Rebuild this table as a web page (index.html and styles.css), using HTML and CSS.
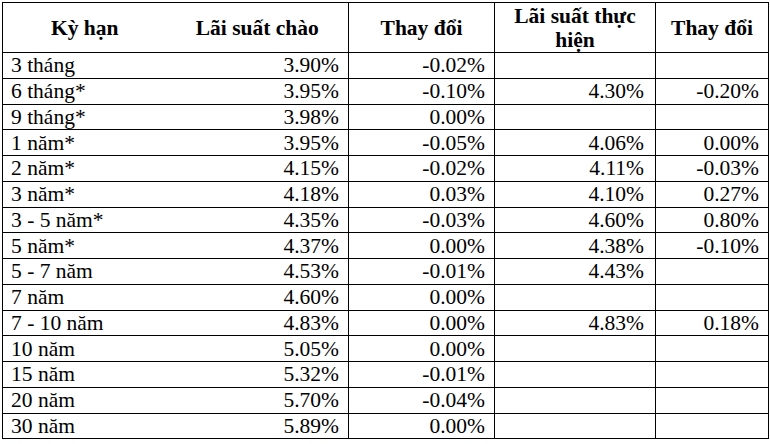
FILE: index.html
```html
<!DOCTYPE html>
<html lang="vi">
<head>
<meta charset="utf-8">
<link rel="stylesheet" href="styles.css">
</head>
<body>
<table class="rates">
  <colgroup>
    <col class="c1"><col class="c2"><col class="c3"><col class="c4"><col class="c5">
  </colgroup>
  <thead>
    <tr>
      <th class="term">Kỳ hạn</th>
      <th class="offer">Lãi suất chào</th>
      <th>Thay đổi</th>
      <th>Lãi suất thực hiện</th>
      <th>Thay đổi</th>
    </tr>
  </thead>
  <tbody>
    <tr><td class="term">3 tháng</td><td class="offer">3.90%</td><td>-0.02%</td><td class="real"></td><td></td></tr>
    <tr><td class="term">6 tháng*</td><td class="offer">3.95%</td><td>-0.10%</td><td class="real">4.30%</td><td>-0.20%</td></tr>
    <tr><td class="term">9 tháng*</td><td class="offer">3.98%</td><td>0.00%</td><td class="real"></td><td></td></tr>
    <tr><td class="term">1 năm*</td><td class="offer">3.95%</td><td>-0.05%</td><td class="real">4.06%</td><td>0.00%</td></tr>
    <tr><td class="term">2 năm*</td><td class="offer">4.15%</td><td>-0.02%</td><td class="real">4.11%</td><td>-0.03%</td></tr>
    <tr><td class="term">3 năm*</td><td class="offer">4.18%</td><td>0.03%</td><td class="real">4.10%</td><td>0.27%</td></tr>
    <tr><td class="term">3 - 5 năm*</td><td class="offer">4.35%</td><td>-0.03%</td><td class="real">4.60%</td><td>0.80%</td></tr>
    <tr><td class="term">5 năm*</td><td class="offer">4.37%</td><td>0.00%</td><td class="real">4.38%</td><td>-0.10%</td></tr>
    <tr><td class="term">5 - 7 năm</td><td class="offer">4.53%</td><td>-0.01%</td><td class="real">4.43%</td><td></td></tr>
    <tr><td class="term">7 năm</td><td class="offer">4.60%</td><td>0.00%</td><td class="real"></td><td></td></tr>
    <tr><td class="term">7 - 10 năm</td><td class="offer">4.83%</td><td>0.00%</td><td class="real">4.83%</td><td>0.18%</td></tr>
    <tr><td class="term">10 năm</td><td class="offer">5.05%</td><td>0.00%</td><td class="real"></td><td></td></tr>
    <tr><td class="term">15 năm</td><td class="offer">5.32%</td><td>-0.01%</td><td class="real"></td><td></td></tr>
    <tr><td class="term">20 năm</td><td class="offer">5.70%</td><td>-0.04%</td><td class="real"></td><td></td></tr>
    <tr><td class="term">30 năm</td><td class="offer">5.89%</td><td>0.00%</td><td class="real"></td><td></td></tr>
  </tbody>
</table>
</body>
</html>
```
FILE: styles.css
```css
html, body {
  margin: 0;
  padding: 0;
  background: #ffffff;
}
body {
  width: 770px;
  height: 444px;
  overflow: hidden;
  font-family: "Liberation Serif", "Times New Roman", serif;
  color: #000;
}
.rates {
  margin: 2px 0 0 2px;
  width: 766px;
  border-collapse: collapse;
  table-layout: fixed;
  font-family: "Liberation Serif", "Times New Roman", serif;
  font-size: 21.5px;
}
.c1 { width: 164px; }
.c2 { width: 182px; }
.c3 { width: 146px; }
.c4 { width: 161px; }
.c5 { width: 113px; }
.rates th, .rates td {
  border: 1px solid #000;
  padding: 0 9px 0 4px;
  vertical-align: middle;
}
.rates th {
  height: 49px;
  font-weight: bold;
  text-align: center;
  line-height: 24px;
  padding: 0 4px;
}
.rates td {
  height: 24.75px;
  line-height: 22px;
  text-align: right;
  white-space: nowrap;
}
.rates td.term {
  text-align: left;
  padding-left: 8px;
}
.rates td.real { padding-right: 11px; }
.rates .term { border-right: none; }
.rates .offer { border-left: none; }
```
